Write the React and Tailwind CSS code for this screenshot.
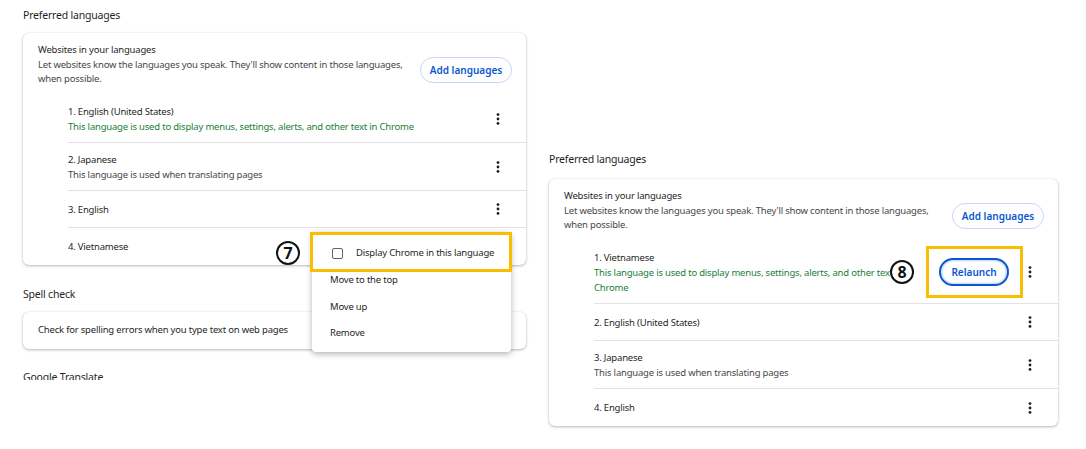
import React from "react";

const font = { fontFamily: '"Noto Sans", "Open Sans", Arial, sans-serif' };

function Kebab() {
  return (
    <button className="w-6 h-6 flex items-center justify-center shrink-0">
      <svg width="4" height="12" viewBox="0 0 4 12">
        <circle cx="2" cy="1.6" r="1.4" fill="#1f1f1f" />
        <circle cx="2" cy="6" r="1.4" fill="#1f1f1f" />
        <circle cx="2" cy="10.4" r="1.4" fill="#1f1f1f" />
      </svg>
    </button>
  );
}

function Header() {
  return (
    <div className="flex justify-between pl-[15px] pr-[14px] pt-[9px] pb-[9px] h-[62px]">
      <div className="text-[9.5px] tracking-[-0.2px]">
        <div className="leading-[16px] text-[#1f1f1f]">Websites in your languages</div>
        <div className="leading-[14px] text-[#474747] w-[368px]">
          Let websites know the languages you speak. They'll show content in those languages, when possible.
        </div>
      </div>
      <button className="mt-[15px] h-[26px] w-[92px] rounded-full border border-[#c4d7f5] text-[10px] font-semibold text-[#0b57d0] bg-white">
        Add languages
      </button>
    </div>
  );
}

function Row({ name, sub, green, last, extra, tall }) {
  return (
    <div
      className={
        "flex items-center ml-[45px] pr-[16px] " +
        (sub ? (tall ? "h-[63px]" : "h-[48px]") : "h-[37px]") +
        (last ? "" : " border-b border-[#e3e3e3]")
      }
    >
      <div className="flex-1 text-[9.5px] tracking-[-0.2px] leading-[15px]">
        <div className="text-[#1f1f1f]">{name}</div>
        {sub && <div className={green ? "text-[#188038] pr-[10px]" : "text-[#474747]"}>{sub}</div>}
      </div>
      {extra}
      <Kebab />
    </div>
  );
}

function Card({ children, className = "" }) {
  return (
    <div className={"bg-white rounded-[6px] shadow-[0_1px_3px_rgba(0,0,0,0.28),0_0_1px_rgba(0,0,0,0.15)] " + className}>
      {children}
    </div>
  );
}

function Circled({ n }) {
  return (
    <div className="w-[24px] h-[24px] rounded-full border-2 border-[#111] bg-white flex items-center justify-center text-[16px] font-bold leading-none text-[#111]">
      {n}
    </div>
  );
}

function Title({ children, className = "" }) {
  return <div className={"text-[10.5px] tracking-[-0.2px] leading-[16px] text-[#1f1f1f] " + className}>{children}</div>;
}

export default function App() {
  return (
    <div className="w-[1086px] h-[449px] bg-white flex overflow-hidden relative" style={font}>
      {/* LEFT SCREENSHOT */}
      <div className="w-[549px] h-[380px] overflow-hidden shrink-0 relative pl-[23px] pt-[7px]">
        <Title>Preferred languages</Title>
        <Card className="mt-[10px] w-[503px]">
          <Header />
          <Row name="1. English (United States)" sub="This language is used to display menus, settings, alerts, and other text in Chrome" green />
          <Row name="2. Japanese" sub="This language is used when translating pages" />
          <Row name="3. English" />
          <Row name="4. Vietnamese" last />
        </Card>

        <Title className="mt-[21px]">Spell check</Title>
        <Card className="mt-[10px] w-[503px] h-[37px] flex items-center pl-[15px]">
          <div className="text-[9.5px] tracking-[-0.2px] text-[#1f1f1f]">Check for spelling errors when you type text on web pages</div>
        </Card>
        <Title className="mt-[20px]">Google Translate</Title>

        {/* context menu */}
        <div className="absolute left-[312px] top-[232px] w-[199px] h-[120px] bg-white rounded-[4px] shadow-[0_2px_6px_rgba(0,0,0,0.3)] pt-[8px] text-[9.5px] tracking-[-0.2px] text-[#1f1f1f]">
          <div className="h-[27px] flex items-center pl-[20px]">
            <span className="w-[11px] h-[11px] border-[1.5px] border-[#5f6368] rounded-[2px] mr-[13px]" />
            Display Chrome in this language
          </div>
          <div className="h-[27px] flex items-center pl-[18px]">Move to the top</div>
          <div className="h-[26px] flex items-center pl-[18px]">Move up</div>
          <div className="h-[27px] flex items-center pl-[18px]">Remove</div>
        </div>
        <div className="absolute left-[310px] top-[232px] w-[202px] h-[40px] border-[3px] border-[#fbbc04]" />
        <div className="absolute left-[276px] top-[241px]">
          <Circled n="7" />
        </div>
      </div>

      {/* RIGHT SCREENSHOT */}
      <div className="pt-[151px] relative">
        <Title>Preferred languages</Title>
        <Card className="mt-[12px] w-[509px]">
          <Header />
          <Row
            name="1. Vietnamese"
            sub="This language is used to display menus, settings, alerts, and other text in Chrome"
            green
            tall
            extra={
              <div className="relative mr-[9px]">
                <button className="h-[28px] w-[70px] rounded-full border-2 border-[#0b57d0] bg-white text-[10px] font-semibold text-[#0b57d0] shadow-[inset_0_0_0_1.5px_#d3e3fd]">
                  Relaunch
                </button>
                <div className="absolute -left-[13px] -top-[12px] w-[97px] h-[52px] border-[3px] border-[#fbbc04]" />
                <div className="absolute -left-[49px] top-[2px]">
                  <Circled n="8" />
                </div>
              </div>
            }
          />
          <Row name="2. English (United States)" />
          <Row name="3. Japanese" sub="This language is used when translating pages" />
          <Row name="4. English" last />
        </Card>
      </div>
    </div>
  );
}
